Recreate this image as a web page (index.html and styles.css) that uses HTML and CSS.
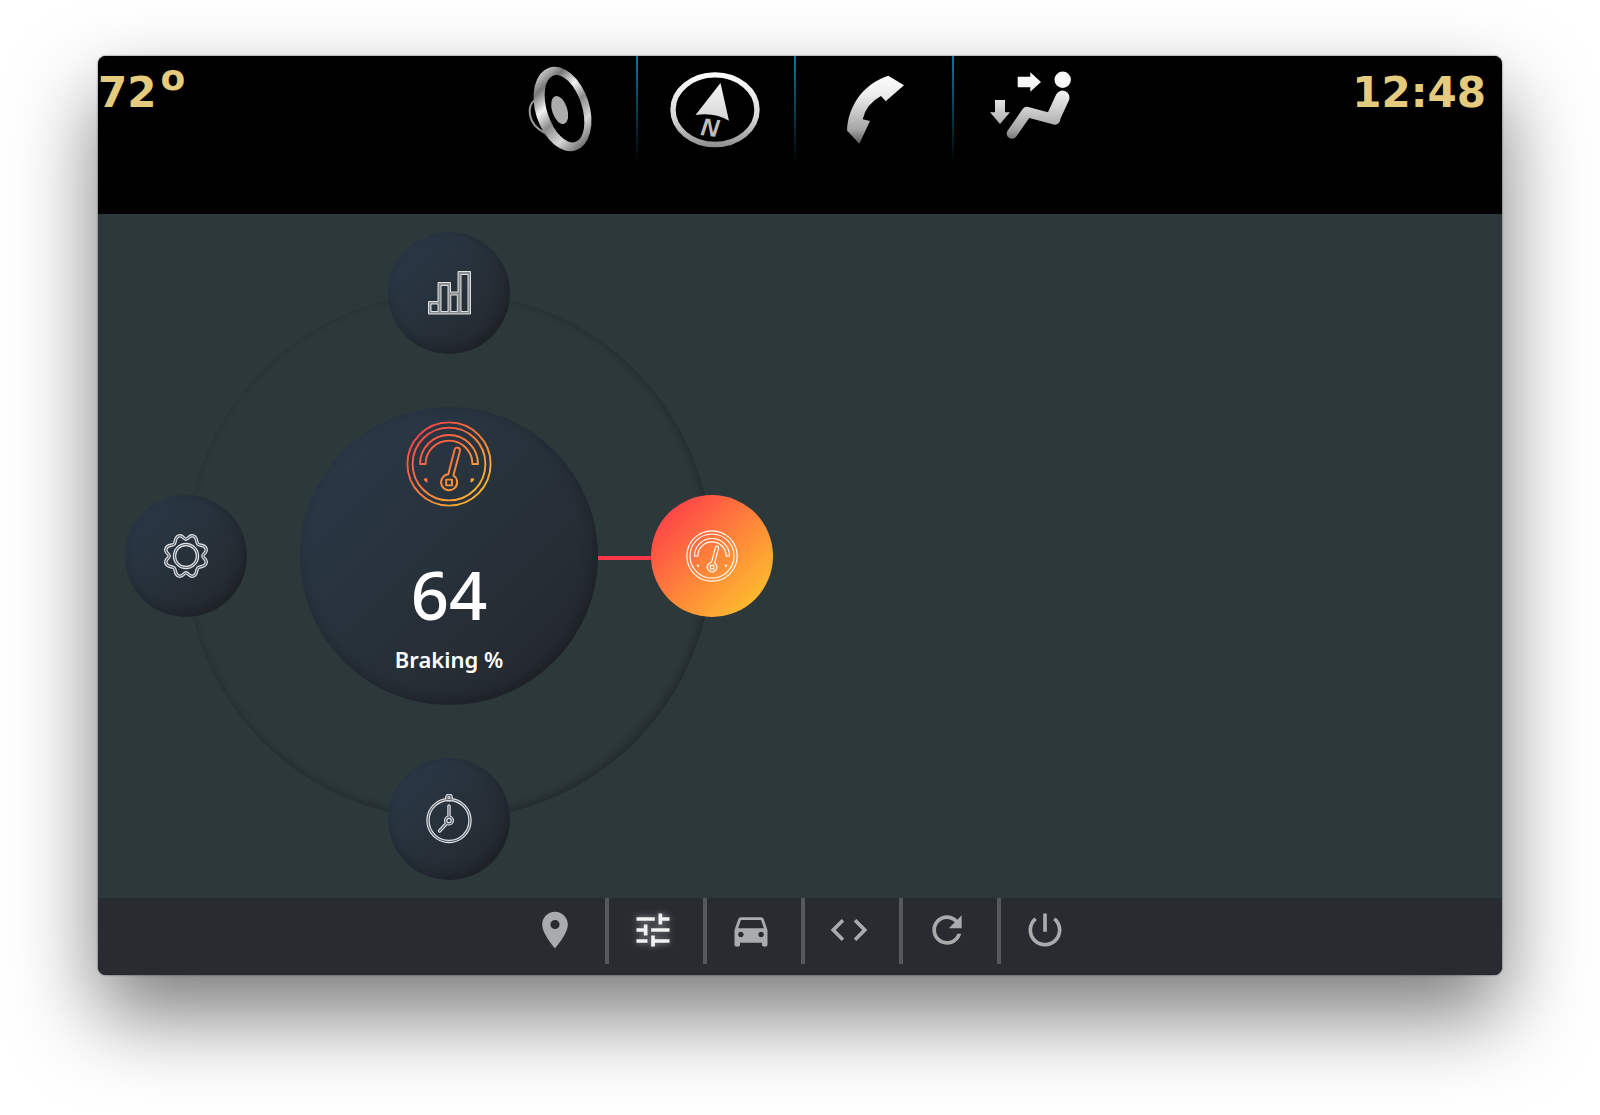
FILE: index.html
```html
<!doctype html>
<html lang="en">
<head>
    <meta charset="UTF-8">
    <title>Dashboard</title>
    <link rel="stylesheet" href="styles.css">
</head>
<body>
    <!-- shared shapes and gradients -->
    <svg class="defs" width="0" height="0" aria-hidden="true">
        <defs>
            <linearGradient id="warm" gradientUnits="userSpaceOnUse" x1="13" y1="13" x2="73" y2="73">
                <stop offset="0" stop-color="#ff4648"/>
                <stop offset="1" stop-color="#fdb62e"/>
            </linearGradient>
            <linearGradient id="silver" gradientUnits="userSpaceOnUse" x1="0" y1="16" x2="0" y2="90">
                <stop offset="0" stop-color="#fff"/>
                <stop offset=".3" stop-color="#eee"/>
                <stop offset=".78" stop-color="#a4a4a4"/>
                <stop offset="1" stop-color="#505050"/>
            </linearGradient>
            <linearGradient id="rim" gradientUnits="userSpaceOnUse" x1="0" y1="16" x2="0" y2="92">
                <stop offset="0" stop-color="#fff"/>
                <stop offset=".6" stop-color="#d8d8d8"/>
                <stop offset="1" stop-color="#8c8c8c"/>
            </linearGradient>
            <linearGradient id="steel" gradientUnits="userSpaceOnUse" x1="62" y1="10" x2="100" y2="96">
                <stop offset="0" stop-color="#efefef"/>
                <stop offset=".2" stop-color="#777"/>
                <stop offset=".38" stop-color="#f4f4f4"/>
                <stop offset=".55" stop-color="#8c8c8c"/>
                <stop offset=".75" stop-color="#d8d8d8"/>
                <stop offset="1" stop-color="#555"/>
            </linearGradient>
            <symbol id="gauge" viewBox="0 0 86 86">
                <g stroke-width="1.9" stroke-linejoin="round" fill="none">
                    <circle cx="43" cy="43" r="41.6"/>
                    <circle cx="43" cy="43" r="36.4"/>
                    <path d="M14 43a29 29 0 0 1 58 0h-5.600a23.400 23.400 0 0 0-46.800 0z"/>
                    <path d="M42.300 53.300L48.600 28.800a2.700 2.700 0 0 1 5.300 1.200L47.400 54.500a8 8 0 1 1-5.100-1.200z"/>
                    <path d="M40.200 58.600h5.800v5.800h-5.800z"/>
                    <path d="M18.800 58.300h1.700v2.200zM67.200 58.300h-1.700v2.200z"/>
                </g>
            </symbol>
            <path id="gear" d="M0-16.800C2.600-16.800 3.200-21.500 7.400-20S10-13.800 11.900-11.900 18.500-11.600 20-7.400 16.800-2.600 16.800 0 21.500 3.200 20 7.400 13.800 10 11.900 11.900 11.600 18.500 7.400 20 2.600 16.800 0 16.800-3.200 21.500-7.400 20-10 13.800-11.900 11.900-18.500 11.600-20 7.400-16.800 2.600-16.800 0-21.500-3.200-20-7.400-13.800-10-11.900-11.900-11.600-18.500-7.400-20-2.600-16.800 0-16.800z"/>
            <g id="watch">
                <circle cx="25" cy="3.500" r="2.200"/>
                <circle cx="25" cy="26.500" r="21"/>
                <path d="M25 12v11M22.500 29.500l-7 7.500"/>
                <circle cx="25" cy="26.500" r="3.300"/>
            </g>
        </defs>
    </svg>

    <div class="window">
        <header class="topbar">
            <div class="temp">72<sup>o</sup></div>
            <nav class="modes">
                <button type="button" aria-label="Audio">
                    <svg viewBox="0 0 158 108">
                        <path d="M56 43C46 50 47 68 65 77" fill="none" stroke="#999" stroke-width="2"/>
                        <ellipse cx="82.500" cy="53" rx="27" ry="43.500" transform="rotate(-18 82.500 53)" fill="url(#steel)"/>
                        <ellipse cx="84.500" cy="52.700" rx="17.500" ry="35" transform="rotate(-18 84.500 52.700)" fill="#000"/>
                        <ellipse cx="79.700" cy="54" rx="7.600" ry="14.500" transform="rotate(-18 79.700 54)" fill="#adadad"/>
                    </svg>
                </button>
                <button type="button" aria-label="Navigation">
                    <svg viewBox="0 0 158 108">
                        <ellipse cx="77" cy="53.700" rx="42" ry="34.800" fill="none" stroke="url(#rim)" stroke-width="5.400"/>
                        <path d="M82.500 27L91 64.700Q76 56 57.500 59z" fill="url(#rim)"/>
                        <text class="north" x="62" y="79" transform="rotate(7 62 79)">N</text>
                    </svg>
                </button>
                <button type="button" aria-label="Phone">
                    <svg viewBox="0 0 158 108">
                        <path d="M92.300 19.700L108 29.300 89.700 45.300 85 40Q70 48 66.700 63.300L74 65 63.300 87.700 51 74.500C52 50 67 28 92.300 19.700z" fill="url(#silver)"/>
                    </svg>
                </button>
                <button type="button" aria-label="Climate">
                    <svg viewBox="0 0 158 108">
                        <circle cx="108.700" cy="23.700" r="8.200" fill="#fcfcfc"/>
                        <path d="M63.700 20.700h12.600v-4.500L87 26 76.300 35.700v-4.400H63.700zM41 44h10v12.300h5L46 68 36 56.300h5z" fill="url(#silver)"/>
                        <path d="M58 77.500L73 56l28 7.500" fill="none" stroke="url(#silver)" stroke-width="10.500" stroke-linecap="round" stroke-linejoin="round"/>
                        <path d="M99.500 61L108.500 41.500" fill="none" stroke="url(#silver)" stroke-width="14" stroke-linecap="round"/>
                    </svg>
                </button>
            </nav>
            <time class="clock">12:48</time>
        </header>

        <main class="stage">
            <div class="dial">
                <div class="ring"></div>
                <button type="button" class="node node-stats" aria-label="Statistics">
                    <svg viewBox="0 0 50 50">
                        <path fill="#fff" fill-opacity=".45" stroke="#eee" stroke-width=".9" fill-rule="evenodd" stroke-linejoin="round" d="M4.500 46V33.500H14V14.500H26.500V24H34V3.500H46.500V46zM7 36v7.500h7V36zM17 17.500v26h7v-26zM26.800 27v16.500h6.500V27zM37 6.500v37h7v-37z"/>
                    </svg>
                </button>
                <button type="button" class="node node-settings" aria-label="Settings">
                    <svg viewBox="-25 -25 50 50" class="double">
                        <use href="#gear" class="outer"/>
                        <use href="#gear" class="inner"/>
                        <circle r="11.500" class="outer"/>
                        <circle r="11.500" class="inner"/>
                    </svg>
                </button>
                <section class="hub">
                    <svg class="hub-icon" stroke="url(#warm)"><use href="#gauge"/></svg>
                    <div class="value">64</div>
                    <div class="label">Braking %</div>
                </section>
                <div class="link"></div>
                <button type="button" class="node node-gauge active" aria-label="Braking">
                    <svg stroke="#fff"><use href="#gauge"/></svg>
                </button>
                <button type="button" class="node node-time" aria-label="Time">
                    <svg viewBox="0 0 50 50" class="double">
                        <use href="#watch" class="outer"/>
                        <use href="#watch" class="inner"/>
                    </svg>
                </button>
            </div>
        </main>

        <footer class="toolbar">
            <button type="button" aria-label="Location">
                <svg viewBox="0 0 24 24"><path d="M12 2C8.130 2 5 5.130 5 9c0 5.250 7 13 7 13s7-7.750 7-13c0-3.870-3.130-7-7-7zm0 9.500a2.500 2.500 0 0 1 0-5 2.500 2.500 0 0 1 0 5z"/></svg>
            </button>
            <button type="button" class="current" aria-label="Tuning">
                <svg viewBox="0 0 24 24"><path d="M3 17v2h6v-2H3zM3 5v2h10V5H3zm10 16v-2h8v-2h-8v-2h-2v6h2zM7 9v2H3v2h4v2h2V9H7zm14 4v-2H11v2h10zm-6-4h2V7h4V5h-4V3h-2v6z"/></svg>
            </button>
            <button type="button" aria-label="Car">
                <svg viewBox="0 0 24 24"><path d="M18.920 6.010C18.720 5.420 18.160 5 17.500 5h-11c-.66 0-1.210.42-1.420 1.010L3 12v8c0 .55.45 1 1 1h1c.55 0 1-.45 1-1v-1h12v1c0 .55.45 1 1 1h1c.55 0 1-.45 1-1v-8l-2.080-5.990zM6.500 16c-.83 0-1.500-.67-1.500-1.500S5.670 13 6.500 13s1.500.67 1.500 1.500S7.330 16 6.500 16zm11 0c-.83 0-1.500-.67-1.500-1.500s.67-1.500 1.500-1.500 1.500.67 1.500 1.500-.67 1.500-1.500 1.500zM5 11l1.500-4.500h11L19 11H5z"/></svg>
            </button>
            <button type="button" aria-label="Code">
                <svg viewBox="0 0 24 24"><path d="M9.400 16.600L4.800 12l4.600-4.600L8 6l-6 6 6 6 1.400-1.400zm5.200 0l4.600-4.600-4.600-4.600L16 6l6 6-6 6-1.400-1.400z"/></svg>
            </button>
            <button type="button" aria-label="Refresh">
                <svg viewBox="0 0 24 24"><path d="M17.650 6.350C16.200 4.900 14.210 4 12 4c-4.420 0-7.990 3.580-7.990 8s3.570 8 7.990 8c3.730 0 6.840-2.550 7.730-6h-2.080c-.82 2.330-3.040 4-5.650 4-3.310 0-6-2.690-6-6s2.690-6 6-6c1.660 0 3.140.69 4.220 1.780L13 11h7V4l-2.350 2.350z"/></svg>
            </button>
            <button type="button" aria-label="Power">
                <svg viewBox="0 0 24 24"><path d="M13 3h-2v10h2V3zm4.830 2.170l-1.420 1.420C17.990 7.860 19 9.810 19 12c0 3.870-3.130 7-7 7s-7-3.130-7-7c0-2.190 1.010-4.140 2.580-5.420L6.170 5.170C4.230 6.820 3 9.260 3 12c0 4.970 4.030 9 9 9s9-4.030 9-9c0-2.740-1.230-5.180-3.170-6.830z"/></svg>
            </button>
        </footer>
    </div>
</body>
</html>
```
FILE: styles.css
```css
*{
    box-sizing: border-box;
    margin: 0;
    padding: 0;
}
body{
    padding: 56px 98px 140px;
    background: #fff;
    font-family: "Noto Sans", sans-serif;
    color: #fff;
}
button{
    border: 0;
    background: none;
    cursor: pointer;
}
svg{
    display: block;
}
.defs{
    position: absolute;
}
.window{
    border-radius: 8px;
    overflow: hidden;
    background: #2d383a;
    box-shadow: 0 0 2px rgba(0,0,0,.7), 0 40px 84px rgba(0,0,0,.52);
}

/* top bar */
.topbar{
    display: grid;
    grid-template-columns: 1fr auto 1fr;
    align-items: start;
    padding: 0 8px 50px 0;
    background: #000;
}
.temp,.clock{
    font: bold 42px/74px "DejaVu Sans", sans-serif;
    color: #e5cb7e;
}
.temp sup{
    margin-left: 4px;
    font-size: 36px;
    line-height: 0;
    vertical-align: 17px;
}
.clock{
    padding-right: 8px;
    text-align: right;
}
.modes{
    display: flex;
}
.modes button{
    width: 158px;
    background: linear-gradient(#087a9c, #06465a 45%, transparent) right / 2px 100% no-repeat;
}
.modes button:last-child{
    background: none;
}
.modes svg{
    width: 158px;
    height: 108px;
}
.north{
    font: italic bold 25px "Liberation Sans", sans-serif;
    fill: #bdbdbd;
}

/* dial */
.stage{
    padding: 18px 27px;
}
.dial{
    display: grid;
    grid-template: 122px 53px 298px 53px 122px / 122px 53px 298px 53px 122px;
    place-items: center;
}
.ring{
    grid-area: 1 / 1 / 6 / 6;
    place-self: stretch;
    margin: 61px;
    border-radius: 50%;
    box-shadow: inset -2px -2px 10px rgba(0,0,0,.3);
}
.node,.hub{
    border-radius: 50%;
    background: linear-gradient(135deg, #2a3847 8%, #27313a 50%, #24272d 95%);
    box-shadow: inset -3px -4px 14px rgba(0,0,0,.25);
}
.node{
    display: flex;
    align-items: center;
    justify-content: center;
    width: 122px;
    height: 122px;
    z-index: 1;
}
.node svg{
    width: 50px;
    height: 50px;
}
.node-stats{
    grid-area: 1 / 3;
}
.node-settings{
    grid-area: 3 / 1;
}
.node-gauge{
    grid-area: 3 / 5;
}
.node-time{
    grid-area: 5 / 3;
}
.node.active{
    background: linear-gradient(135deg, #ff4648 14%, #ff8a38 55%, #fdb92e 86%);
    box-shadow: none;
}
.node.active svg{
    width: 52px;
    height: 52px;
}
.double{
    fill: none;
    stroke-linecap: round;
}
.double .outer{
    stroke: #e4e6e8;
    stroke-width: 3.4px;
}
.double .inner{
    stroke: #59636d;
    stroke-width: 1.2px;
}
.hub{
    grid-area: 3 / 3;
    display: flex;
    flex-direction: column;
    align-items: center;
    width: 298px;
    height: 298px;
    padding-top: 14px;
}
.hub-icon{
    width: 86px;
    height: 86px;
}
.value{
    margin-top: 47px;
    font-size: 67px;
    font-weight: 500;
    line-height: 80px;
}
.label{
    margin-top: 8px;
    font-size: 22px;
    font-weight: 600;
    line-height: 34px;
}
.link{
    grid-area: 3 / 4;
    justify-self: stretch;
    height: 4px;
    margin-top: 3px;
    background: #ff3549;
}

/* bottom bar */
.toolbar{
    display: flex;
    justify-content: center;
    padding-bottom: 11px;
    background: #282b30;
}
.toolbar button{
    padding: 10px 28px 12px 22px;
    border-right: 4px solid #55585c;
}
.toolbar button:last-child{
    padding-right: 22px;
    border-right: 0;
}
.toolbar svg{
    width: 44px;
    height: 44px;
    fill: #a9abad;
}
.toolbar .current svg{
    fill: #f2f2f2;
    filter: drop-shadow(0 0 3px rgba(255,255,255,.5));
}
```
